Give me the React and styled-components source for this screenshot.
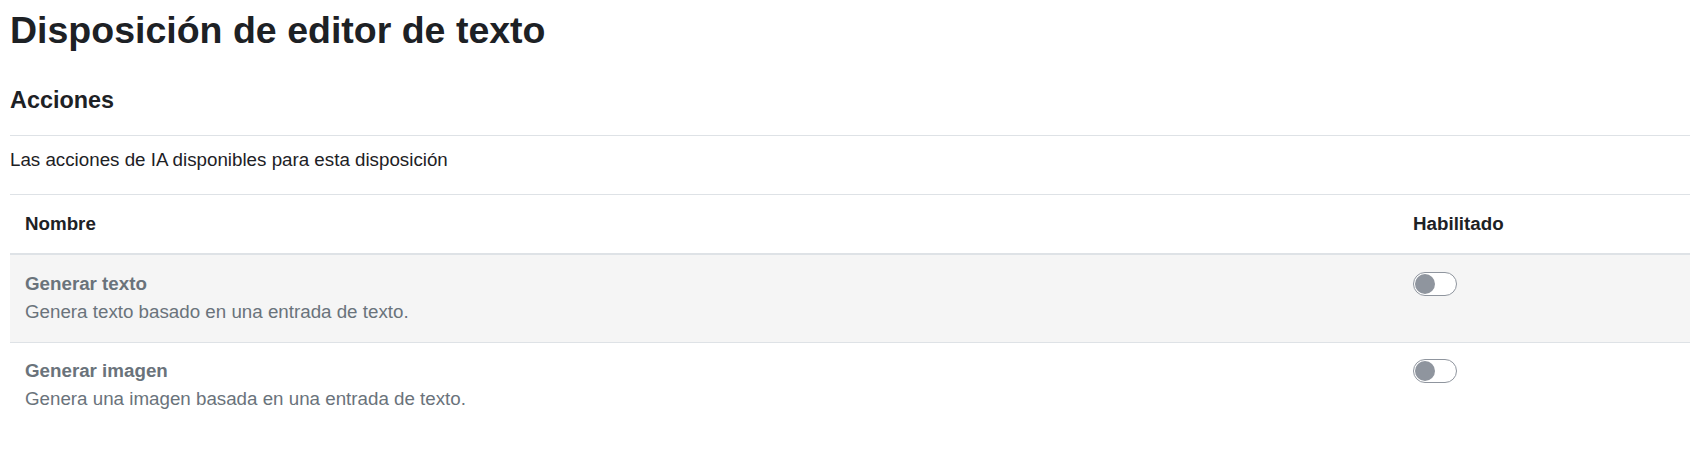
import React from "react";
import styled, { createGlobalStyle } from "styled-components";

const GlobalStyle = createGlobalStyle`
  body {
    margin: 0;
    background: #fff;
    font-family: "Liberation Sans", Arial, sans-serif;
    font-size: 18.75px;
    line-height: 1.5;
    color: #1d2125;
  }
`;

const Page = styled.div`
  padding: 0 0 0 10px;
`;

const Title = styled.h2`
  margin: 8px 0 33px;
  font-size: 37.5px;
  line-height: 1.2;
  font-weight: 700;
`;

const SectionTitle = styled.h4`
  margin: 0 0 21px;
  font-size: 23.4px;
  line-height: 1.2;
  font-weight: 700;
`;

const Section = styled.section`
  border-top: 1px solid #dee2e6;
  padding-top: 10px;
`;

const Description = styled.p`
  margin: 0 0 20px;
`;

const Table = styled.table`
  width: 100%;
  border-collapse: collapse;
`;

const HeadCell = styled.th`
  text-align: left;
  font-weight: 700;
  padding: 15px;
  border-top: 1px solid #dee2e6;
  border-bottom: 2px solid #dee2e6;
  width: ${(p) => p.$width || "auto"};
`;

const Row = styled.tr`
  background: ${(p) => (p.$striped ? "#f5f5f5" : "transparent")};
  border-top: ${(p) => (p.$first ? "none" : "1px solid #dee2e6")};

  & > td {
    padding-top: ${(p) => (p.$first ? "15px" : "14px")};
  }
`;

const Cell = styled.td`
  padding: 15px;
  vertical-align: top;
  color: #6a737b;
`;

const ActionName = styled.div`
  font-weight: 700;
`;

const ActionInfo = styled.div``;

const Switch = styled.span`
  display: block;
  box-sizing: border-box;
  position: relative;
  width: 44px;
  height: 24px;
  margin-top: 2px;
  border: 1px solid #8f959e;
  border-radius: 12px;
  background: #fff;

  &::after {
    content: "";
    position: absolute;
    top: 1px;
    left: 1px;
    width: 20px;
    height: 20px;
    border-radius: 50%;
    background: #8f959e;
  }
`;

const actions = [
  {
    name: "Generar texto",
    info: "Genera texto basado en una entrada de texto.",
  },
  {
    name: "Generar imagen",
    info: "Genera una imagen basada en una entrada de texto.",
  },
];

export default function App() {
  return (
    <>
      <GlobalStyle />
      <Page>
        <Title>Disposición de editor de texto</Title>
        <SectionTitle>Acciones</SectionTitle>
        <Section>
          <Description>
            Las acciones de IA disponibles para esta disposición
          </Description>
          <Table>
            <thead>
              <tr>
                <HeadCell $width="1358px">Nombre</HeadCell>
                <HeadCell>Habilitado</HeadCell>
              </tr>
            </thead>
            <tbody>
              {actions.map((action, i) => (
                <Row key={action.name} $striped={i % 2 === 0} $first={i === 0}>
                  <Cell>
                    <ActionName>{action.name}</ActionName>
                    <ActionInfo>{action.info}</ActionInfo>
                  </Cell>
                  <Cell>
                    <Switch role="switch" aria-checked="false" />
                  </Cell>
                </Row>
              ))}
            </tbody>
          </Table>
        </Section>
      </Page>
    </>
  );
}
